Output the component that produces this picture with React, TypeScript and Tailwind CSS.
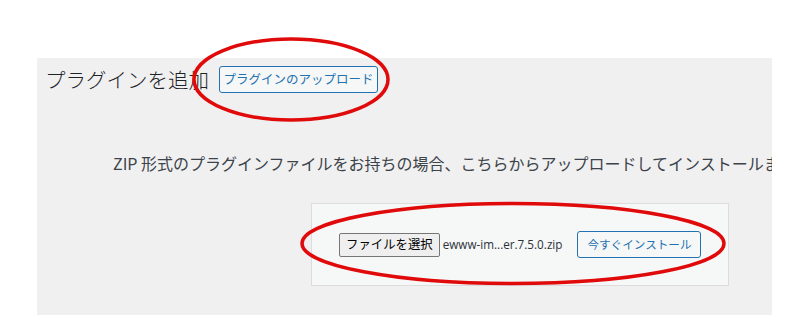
import React from "react";

const jp = { fontFamily: '"Noto Sans CJK JP", "Noto Sans", sans-serif' };

export default function App() {
  return (
    <div className="relative w-[804px] h-[332px] bg-white overflow-hidden" style={jp}>
      <div className="ml-[37px] mt-[58px] w-[735px] h-[257px] bg-[#f0f0f1] overflow-hidden">
        <div className="flex items-center pt-[8px] pl-[8px] h-[35px]">
          <h1 className="text-[20.5px] leading-none font-light text-[#1d2327]">プラグインを追加</h1>
          <button className="ml-[10px] h-[27px] w-[159px] border border-[#2271b1] rounded-[3px] bg-[#f6f7f7] text-[#2271b1] text-[12.5px] leading-none flex items-center justify-center">
            プラグインのアップロード
          </button>
        </div>
        <p className="mt-[60px] ml-[76px] whitespace-nowrap text-[16px] leading-[20px] text-[#3c434a]">
          ZIP 形式のプラグインファイルをお持ちの場合、こちらからアップロードしてインストールまたは更新できます。
        </p>
        <div className="mt-[30px] ml-[274px] w-[418px] h-[83px] bg-[#f6f7f7] border border-[#dcdcde] flex items-center pl-[27px]">
          <button className="h-[24px] px-[6px] border border-[#767676] rounded-[2px] bg-[#efefef] text-black text-[12.4px] leading-none flex items-center">
            ファイルを選択
          </button>
          <span className="ml-[3px] text-[11.7px] text-[#2c3338]" style={{ fontFamily: '"Open Sans", "Noto Sans", sans-serif' }}>
            ewww-im...er.7.5.0.zip
          </span>
          <button className="ml-[15px] h-[27px] w-[124px] border border-[#2271b1] rounded-[3px] bg-[#f6f7f7] text-[#2271b1] text-[11.6px] leading-none flex items-center justify-center">
            今すぐインストール
          </button>
        </div>
      </div>
      <svg className="absolute inset-0 pointer-events-none" width="804" height="332">
        <ellipse cx="291" cy="79.5" rx="97" ry="40.5" fill="none" stroke="#e00a0a" strokeWidth="3.5" />
        <ellipse cx="513" cy="243.5" rx="211" ry="40" fill="none" stroke="#e00a0a" strokeWidth="3.5" />
      </svg>
    </div>
  );
}
